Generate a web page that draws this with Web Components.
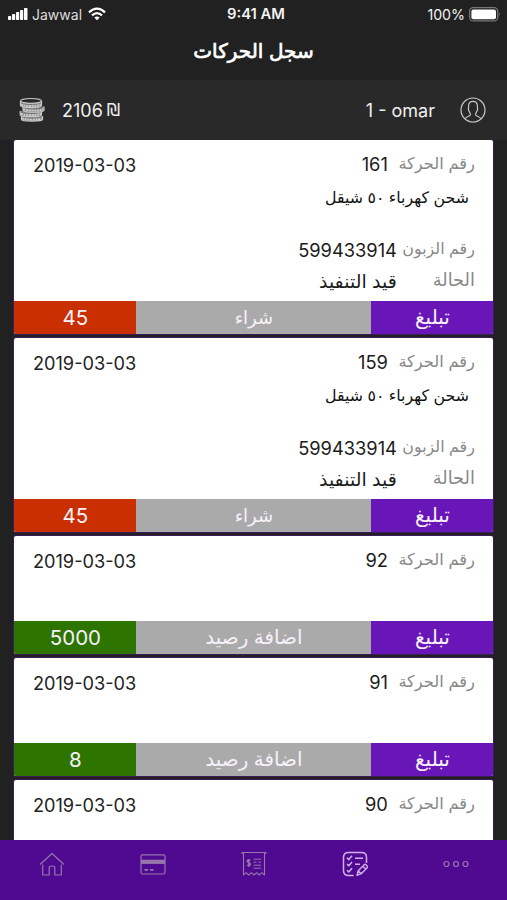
<!DOCTYPE html>
<html lang="ar">
<head>
<meta charset="utf-8">
<meta name="viewport" content="width=device-width, initial-scale=1">
<title>سجل الحركات</title>
<style>
    html, body { margin: 0; height: 100%; overflow: hidden; background: #212121; }
    body { font-family: Inter, "DejaVu Sans", sans-serif; }
</style>
</head>
<body>
<wallet-app></wallet-app>

<script>
    // FUNCTION: define - register an element whose shadow root holds the given HTML
    const define = (name, html) => customElements.define(
        name,
        class extends HTMLElement {
            constructor() {
                super()
                    .attachShadow({ mode: "open" })
                    .innerHTML = typeof html == "string" ? html : "";
            }
            connectedCallback() {
                // elements that depend on attributes render once they are connected
                if (typeof html == "function") this.shadowRoot.innerHTML = html(this);
            }
        }
    );

    // every line icon is drawn in a 26x26 box
    const icons = {
        home: `<path d="M1 13.5 13 2.5l12 11M3.7 13.5V24h6.5v-7.2q0-1.8 2.8-1.8t2.8 1.8V24h6.5V13.5"/>`,
        card: `<rect x="1" y="3.8" width="24" height="19.2" rx="1.5"/><path d="M1 10.8h24" stroke-width="4.2"/><path d="M4.5 18.8h3.5m2 0h3.5" stroke-width="1.8"/>`,
        receipt: `<path d="M1 3V1.5h24V3M2.5 2v22l2.6-2.3 2.7 2.3 2.6-2.3L13 24l2.6-2.3 2.6 2.3 2.7-2.3 2.6 2.3V2" stroke-width="1.1"/><path d="M9.3 9.5c-1.4-1-3.2-.5-3.2.8 0 1.8 3.4 1 3.4 2.9 0 1.5-2.1 1.8-3.5.8M7.8 8v8" stroke-width="1.4"/><path d="M12.5 8.2h7.5m-7.5 3h3m2 0h2.5m-7.5 3h7.5m-7.5 3h7.5" stroke-width="1"/>`,
        list: `<path d="M24.5 12V6.5q0-5-5-5h-13q-5 0-5 5v13q0 5 5 5h5.2" stroke-width="1.5"/><path d="m5 6.8 1.8 1.8 3.2-3.8M5 13l1.8 1.8L10 11M5 19.2 6.8 21l3.2-3.8M13 7.2h8M13 13.3h5" stroke-width="1.5"/><path d="m15 24.3 1.2-4.6 6-6q.8-.8 1.8.1l1.1 1.1q.9.9.1 1.8l-6 6zM20.8 15.2l2.9 2.9M16.2 19.7l3 3" stroke-width="1.4"/>`,
        more: `<circle cx="3.5" cy="13" r="2.5"/><circle cx="13" cy="13" r="2.5"/><circle cx="22.5" cy="13" r="2.5"/>`,
        user: `<circle cx="13" cy="13" r="12"/><path d="M5.3 21.6c.7-2.1 4.7-2 5.1-3.7.2-1-.4-2-1-3.3-.5-.3-1-1.6-1-2.6L8.7 8c.4-2.7 2-3.7 4.3-3.7s3.9 1 4.3 3.7l.3 4c0 1-.5 2.3-1 2.6-.6 1.3-1.2 2.3-1 3.3.4 1.7 4.4 1.6 5.1 3.7"/>`,
        coins: `<g fill="#777"><path d="M2.5 19v3.4c0 2.2 21 2.2 21 0V19"/><path d="M1.2 14v3.9c0 2.3 21.3 2.3 21.3 0V14"/><path d="M4 9.5v3.8c0 2.6 21 2.6 21 0V9.5"/><path d="M1.5 4v4.6c0 2.6 21 2.6 21 0V4"/><ellipse cx="12" cy="3.9" rx="10.5" ry="2.4" fill="#292929"/></g><path d="M2 7.3c2 2.2 18 2.2 20 0M4.5 12c3 2 17 2 20 0M2 16.6c3 2 17 2 20 0M3 21.3c3 1.8 17 1.8 20 0" stroke-width="2" stroke-dasharray="2.2 .5"/>`
    };

    define("line-icon", el => `
        <style>
            :host { display: block; width: 26px; height: 26px; flex: none; }
            svg { display: block; width: 100%; height: 100%; }
        </style>
        <svg viewBox="0 0 26 26" fill="none" stroke="currentColor" stroke-width="1.2" stroke-linecap="butt" stroke-linejoin="round">${icons[el.getAttribute("name")]}</svg>`);

    define("status-bar", `
        <style>
            :host { display: grid; grid-template-columns: 1fr auto 1fr; align-items: center; height: 28px; padding: 0 6px 0 8px; color: #f2f2f2; font-size: 14.2px; box-sizing: border-box; }
            div { display: flex; align-items: center; }
            .end { justify-content: flex-end; gap: 4px; }
            b { margin-left: 3px; font-size: 14.8px; font-weight: 600; }
            .carrier { margin: 0 6px 0 4px; font-size: 14px; color: #ddd; }
            svg { display: block; }
        </style>
        <div>
            <svg width="20" height="14" fill="#fff"><rect y="9" width="3.2" height="4" rx=".8"/><rect x="4" y="7" width="3.2" height="6" rx=".8"/><rect x="8" y="5" width="3.2" height="8" rx=".8"/><rect x="12" y="3" width="3.2" height="10" rx=".8"/><rect x="16" y="1" width="3.5" height="12" rx=".8"/></svg>
            <span class="carrier">Jawwal</span>
            <svg width="18" height="14" fill="none" stroke="#fff" stroke-width="2.3"><path d="M1 5.3Q9-2 17 5.3M4 8.4q5-4.5 10 0"/><path d="M6.3 10.6 9 13.3l2.7-2.7q-2.7-2.3-5.4 0z" fill="#fff" stroke="none"/></svg>
        </div>
        <b>9:41 AM</b>
        <div class="end">
            <span>100%</span>
            <svg width="32" height="15"><rect x=".7" y=".7" width="28" height="13.2" rx="3.5" fill="none" stroke="#777" stroke-width="1.3"/><rect x="2.4" y="2.4" width="24.6" height="9.8" rx="2" fill="#fff"/><path d="M30 5q1.7 2.3 0 4.6z" fill="#777"/></svg>
        </div>`);

    define("page-title", `
        <style>
            :host { display: block; height: 52px; line-height: 46px; text-align: center; color: #fff; font-size: 20px; -webkit-text-stroke: .7px #fff; }
        </style>
        <slot></slot>`);

    define("account-bar", `
        <style>
            :host { display: flex; align-items: center; height: 60px; padding: 0 21px 0 19px; box-sizing: border-box; background: #292929; color: #f0f0f0; font-size: 18px; }
            line-icon { color: #c8c8c8; }
            .balance { margin-left: 17px; }
            .currency { margin-left: 4px; font: 17px "DejaVu Sans", sans-serif; }
            .name { margin: 0 25px 0 auto; }
        </style>
        <line-icon name="coins"></line-icon>
        <span class="balance"><slot name="balance"></slot></span>
        <span class="currency">₪</span>
        <span class="name"><slot name="name"></slot></span>
        <line-icon name="user"></line-icon>`);

    // a label and its value, read from right to left
    define("data-row", el => `
        <style>
            :host { display: flex; direction: rtl; align-items: center; height: 26px; line-height: 26px; white-space: nowrap; }
            .label { width: var(--label-width, 78px); color: #888; font-size: var(--label-size, 16.3px); }
            .value { margin-top: var(--value-drop, 2px); color: #1b1b1b; font-size: var(--value-size, 18.3px); }
        </style>
        <span class="label">${el.getAttribute("label")}</span>
        <span class="value"><slot></slot></span>`);

    define("transaction-card", el => {
        const get = name => el.getAttribute(name);
        const details = get("note") ? `
            <div class="note">${get("note")}</div>
            <data-row class="phone" label="رقم الزبون">${get("phone")}</data-row>
            <data-row class="state" label="الحالة">${get("state")}</data-row>` : "";
        const footer = get("amount") ? `
            <footer>
                <span class="amount">${get("amount")}</span>
                <span class="kind" dir="rtl">${get("kind")}</span>
                <span class="report">تبليغ</span>
            </footer>` : "";
        return `
        <style>
            :host { display: flex; flex-direction: column; flex: none; height: 117.5px; border-radius: 2px; overflow: hidden; background: #fff; box-shadow: 0 0 0 1px #3b1b5b; }
            :host([note]) { height: 193.5px; }
            .body { flex: 1; display: grid; grid-template-columns: auto 1fr; align-items: start; padding: 10px 18.5px 0 18.5px; }
            .date { color: #222; font-size: 18.2px; line-height: 31px; }
            .number { --label-width: 87px; }
            .note { margin: 9px 6px 0 0; direction: rtl; line-height: 26px; color: #111; font-size: 15.8px; }
            .phone { margin-top: 25px; --label-size: 15.9px; }
            .state { margin-top: 5px; --label-size: 17.8px; --value-size: 19px; --value-drop: 3px; }
            footer { display: grid; grid-template-columns: 122px 1fr 122px; height: 32.5px; line-height: 33px; text-align: center; color: #f7f1fa; }
            .amount { background: #2d7500; font-size: 20.5px; line-height: 34px; }
            :host([debit]) .amount { background: #c92f00; }
            .kind { background: #aaa; font-size: 19.9px; }
            :host([debit]) .kind { font-size: 18px; }
            .report { background: #6916b8; font-size: 20px; }
        </style>
        <div class="body">
            <span class="date">${get("date")}</span>
            <div>
                <data-row class="number" label="رقم الحركة">${get("number")}</data-row>
                ${details}
            </div>
        </div>
        ${footer}`;
    });

    define("tab-bar", `
        <style>
            :host { display: grid; grid-template-columns: repeat(5, 101px); justify-content: center; justify-items: center; height: 60px; padding-top: 10.5px; box-sizing: border-box; background: #500a91; color: #9776ac; }
            .active { color: #d2afe8; }
        </style>
        <line-icon name="home"></line-icon>
        <line-icon name="card"></line-icon>
        <line-icon name="receipt"></line-icon>
        <line-icon name="list" class="active"></line-icon>
        <line-icon name="more"></line-icon>`);

    define("wallet-app", `
        <style>
            :host { display: flex; flex-direction: column; width: 507px; height: 900px; background: #212121; }
            main { flex: 1; min-height: 0; overflow: hidden; display: flex; flex-direction: column; gap: 4.5px; padding: 0 13.6px 0 14.4px; }
        </style>
        <status-bar></status-bar>
        <page-title>سجل الحركات</page-title>
        <account-bar>
            <span slot="balance">2106</span>
            <span slot="name">1 - omar</span>
        </account-bar>
        <main>
            <transaction-card debit number="161" date="2019-03-03" note="شحن كهرباء ٥٠ شيقل" phone="599433914" state="قيد التنفيذ" kind="شراء" amount="45"></transaction-card>
            <transaction-card debit number="159" date="2019-03-03" note="شحن كهرباء ٥٠ شيقل" phone="599433914" state="قيد التنفيذ" kind="شراء" amount="45"></transaction-card>
            <transaction-card number="92" date="2019-03-03" kind="اضافة رصيد" amount="5000"></transaction-card>
            <transaction-card number="91" date="2019-03-03" kind="اضافة رصيد" amount="8"></transaction-card>
            <transaction-card number="90" date="2019-03-03"></transaction-card>
        </main>
        <tab-bar></tab-bar>`);
</script>
</body>
</html>
